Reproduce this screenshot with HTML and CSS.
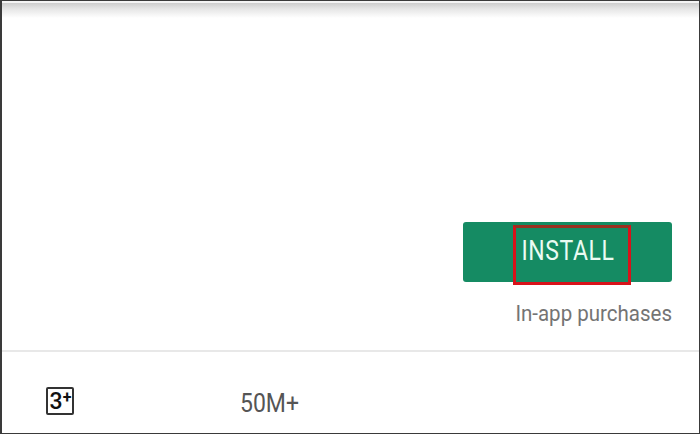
FILE: index.html
```html
<!DOCTYPE html>
<html>
<head>
<meta charset="utf-8">
<link rel="stylesheet" href="styles.css">
</head>
<body>
<div class="frame">
  <div class="topgap"></div>
  <div class="shadow"></div>
  <div class="hero">
    <div class="actions">
      <div class="btn-wrap">
        <button class="install"><span class="install-label">INSTALL</span></button>
        <div class="highlight"></div>
      </div>
      <div class="iap">In-app purchases</div>
    </div>
  </div>
  <div class="divider"></div>
  <div class="stats">
    <div class="stat stat-rating"><span class="badge">3<span class="plus">+</span></span></div>
    <div class="stat stat-downloads"><span class="tall">50M+</span></div>
  </div>
</div>
</body>
</html>
```
FILE: styles.css
```css
html, body {
  margin: 0;
  padding: 0;
  background: #fff;
}
.frame {
  width: 700px;
  height: 434px;
  box-sizing: border-box;
  border: 1px solid #3a3a3a;
  border-left-width: 2px;
  background: #fff;
  display: flex;
  flex-direction: column;
  font-family: Roboto, "Noto Sans", sans-serif;
  overflow: hidden;
}
.topgap {
  height: 2px;
  background: #f4f4f4;
}
.shadow {
  height: 15px;
  background: linear-gradient(#cdcdcd, #e6e6e6 40%, #fff);
}
.hero {
  height: 332px;
  display: flex;
  justify-content: flex-end;
  align-items: flex-start;
  padding-right: 27px;
  box-sizing: border-box;
  padding-top: 204px;
}
.actions {
  display: flex;
  flex-direction: column;
  align-items: flex-end;
}
.btn-wrap {
  position: relative;
}
.install {
  display: block;
  width: 209px;
  height: 60px;
  border: none;
  border-radius: 3px;
  background: #158b63;
  color: #eafbf2;
  font-family: Roboto, "Noto Sans", sans-serif;
  font-size: 23px;
  letter-spacing: 0.6px;
  padding: 0 0 0 1px;
  line-height: 60px;
}
.install-label {
  display: inline-block;
  transform: scaleY(1.18);
}
.highlight {
  position: absolute;
  left: 50px;
  top: 3px;
  width: 118px;
  height: 60px;
  box-sizing: border-box;
  border: 3px solid #d8121a;
  border-top-color: #9a3020;
}
.iap {
  margin-top: 20px;
  font-size: 20.5px;
  color: #747474;
  line-height: 24px;
  display: inline-block;
  transform: scaleY(1.06);
}
.divider {
  height: 2px;
  background: #e8e8e8;
}
.stats {
  flex: 1;
  display: flex;
  align-items: flex-start;
  padding-top: 35px;
  padding-left: 44px;
}
.stat-rating {
  width: 194px;
}
.badge {
  display: inline-flex;
  align-items: center;
  justify-content: center;
  width: 28px;
  height: 28px;
  box-sizing: border-box;
  border: 2px solid #333;
  border-radius: 2px;
  font-size: 23px;
  font-weight: 500;
  color: #111;
  line-height: 1;
  padding-left: 1px;
}
.plus {
  font-size: 16px;
  align-self: flex-start;
  margin-top: 1px;
  font-weight: 700;
}
.stat-downloads {
  font-size: 23px;
  color: #555;
  line-height: 28px;
  padding-top: 4px;
}
.tall {
  display: inline-block;
  transform: scaleY(1.15);
  transform-origin: 50% 80%;
}
```
